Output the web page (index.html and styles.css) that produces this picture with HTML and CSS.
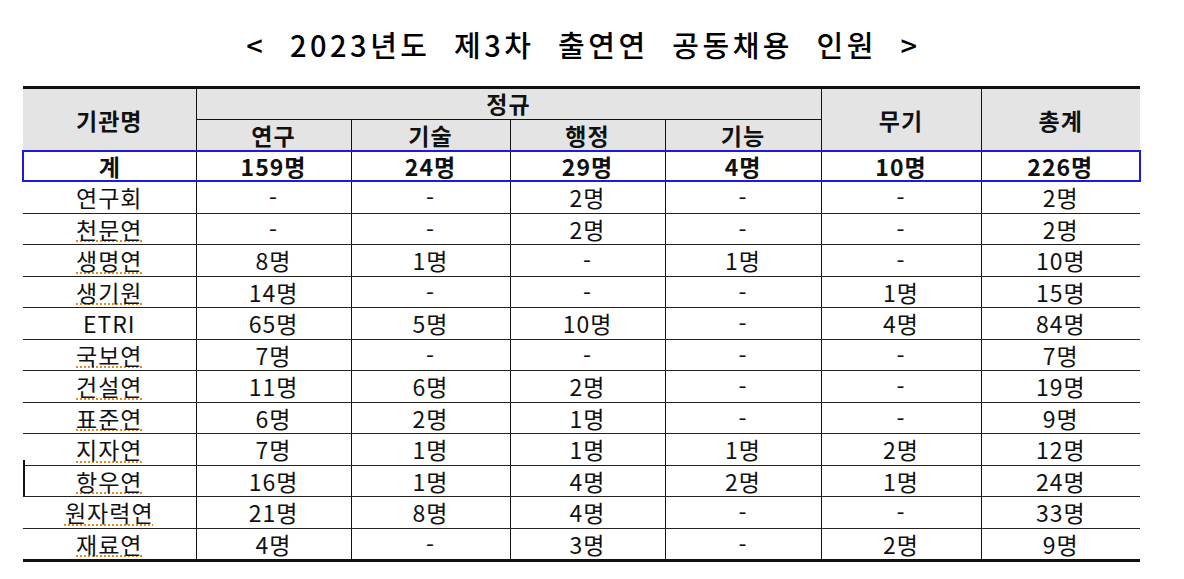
FILE: index.html
```html
<!DOCTYPE html>
<html lang="ko">
<head>
<meta charset="utf-8">
<title>2023년도 제3차 출연연 공동채용 인원</title>
<link rel="stylesheet" href="styles.css">
</head>
<body>
<div class="page">
  <h1 class="title">&lt; 2023년도 제3차 출연연 공동채용 인원 &gt;</h1>
  <div class="table-wrap">
    <table class="recruit">
      <colgroup>
        <col class="c-name"><col class="c1"><col class="c2"><col class="c3"><col class="c4"><col class="c5"><col class="c6">
      </colgroup>
      <thead>
        <tr class="h1">
          <th rowspan="2">기관명</th>
          <th colspan="4" class="group">정규</th>
          <th rowspan="2">무기</th>
          <th rowspan="2">총계</th>
        </tr>
        <tr class="h2">
          <th>연구</th><th>기술</th><th>행정</th><th>기능</th>
        </tr>
      </thead>
      <tbody>
        <tr class="total">
          <td>계</td><td>159명</td><td>24명</td><td>29명</td><td>4명</td><td>10명</td><td>226명</td>
        </tr>
        <tr><td>연구회</td><td>-</td><td>-</td><td>2명</td><td>-</td><td>-</td><td>2명</td></tr>
        <tr><td><span class="sp">천문연</span></td><td>-</td><td>-</td><td>2명</td><td>-</td><td>-</td><td>2명</td></tr>
        <tr><td><span class="sp">생명연</span></td><td>8명</td><td>1명</td><td>-</td><td>1명</td><td>-</td><td>10명</td></tr>
        <tr><td><span class="sp">생기원</span></td><td>14명</td><td>-</td><td>-</td><td>-</td><td>1명</td><td>15명</td></tr>
        <tr><td>ETRI</td><td>65명</td><td>5명</td><td>10명</td><td>-</td><td>4명</td><td>84명</td></tr>
        <tr><td><span class="sp">국보연</span></td><td>7명</td><td>-</td><td>-</td><td>-</td><td>-</td><td>7명</td></tr>
        <tr><td><span class="sp">건설연</span></td><td>11명</td><td>6명</td><td>2명</td><td>-</td><td>-</td><td>19명</td></tr>
        <tr><td><span class="sp">표준연</span></td><td>6명</td><td>2명</td><td>1명</td><td>-</td><td>-</td><td>9명</td></tr>
        <tr><td><span class="sp">지자연</span></td><td>7명</td><td>1명</td><td>1명</td><td>1명</td><td>2명</td><td>12명</td></tr>
        <tr><td class="caret-cell"><span class="caret"></span><span class="sp">항우연</span></td><td>16명</td><td>1명</td><td>4명</td><td>2명</td><td>1명</td><td>24명</td></tr>
        <tr><td><span class="sp">원자력연</span></td><td>21명</td><td>8명</td><td>4명</td><td>-</td><td>-</td><td>33명</td></tr>
        <tr><td><span class="sp">재료연</span></td><td>4명</td><td>-</td><td>3명</td><td>-</td><td>2명</td><td>9명</td></tr>
      </tbody>
    </table>
  </div>
</div>
</body>
</html>
```

FILE: styles.css
```css
html, body {
  margin: 0;
  padding: 0;
  background: #ffffff;
}

.page {
  width: 1184px;
  height: 579px;
  padding: 0 0 0 22px;
  box-sizing: border-box;
  font-family: "Noto Sans CJK KR", "Noto Sans", sans-serif;
  color: #111;
  overflow: hidden;
}

.title {
  margin: 0;
  height: 86px;
  padding-top: 25px;
  padding-left: 6px;
  box-sizing: border-box;
  width: 1117px;
  text-align: center;
  font-size: 29px;
  font-weight: 500;
  line-height: 38px;
  letter-spacing: 3.5px;
  word-spacing: 12px;
  color: #000;
}

.table-wrap {
  width: 1117px;
}

.recruit {
  width: 1117px;
  border-collapse: collapse;
  table-layout: fixed;
  font-size: 23px;
}

.c-name { width: 173px; }
.c1 { width: 155px; }
.c2 { width: 159px; }
.c3 { width: 155px; }
.c4 { width: 156px; }
.c5 { width: 160px; }
.c6 { width: 159px; }

.recruit th,
.recruit td {
  padding: 0;
  text-align: center;
  vertical-align: middle;
  border-left: 1px solid #111;
  border-right: 1px solid #111;
  line-height: 24px;
  white-space: nowrap;
  letter-spacing: 1px;
}

.recruit tr > :first-child { border-left: none; }
.recruit tr > :last-child { border-right: none; }
.recruit .h2 > :first-child { border-left: 1px solid #111; }
.recruit .h2 > :last-child { border-right: 1px solid #111; }

.recruit th {
  background: #e4e4e4;
  font-weight: 700;
  font-size: 23px;
}

.recruit .h1 th {
  border-top: 3px solid #111;
  height: 30px;
}

.recruit .h1 th.group {
  border-bottom: 1px solid #111;
  padding-bottom: 3px;
  height: 27px;
}

.recruit .h2 th {
  height: 30px;
}

.recruit .total td {
  font-weight: 700;
  height: 28px;
  border-top: 2px solid #1a1ae0;
  border-bottom: 2px solid #1a1ae0;
}

.recruit .total td:first-child { border-left: 2px solid #1a1ae0; }
.recruit .total td:last-child { border-right: 2px solid #1a1ae0; }

.recruit tbody tr:not(.total) td {
  height: 30.5px;
  border-bottom: 1px solid #222;
  font-weight: 400;
}

.recruit tbody tr:last-child td {
  border-bottom: 3px solid #111;
}

.sp {
  text-decoration-line: underline;
  text-decoration-style: dotted;
  text-decoration-color: #e58a1f;
  text-decoration-thickness: 2px;
  text-underline-offset: 2px;
}

.caret-cell {
  position: relative;
}

.caret {
  position: absolute;
  left: 0;
  top: -6px;
  width: 2px;
  height: 36px;
  background: #111;
}
```
